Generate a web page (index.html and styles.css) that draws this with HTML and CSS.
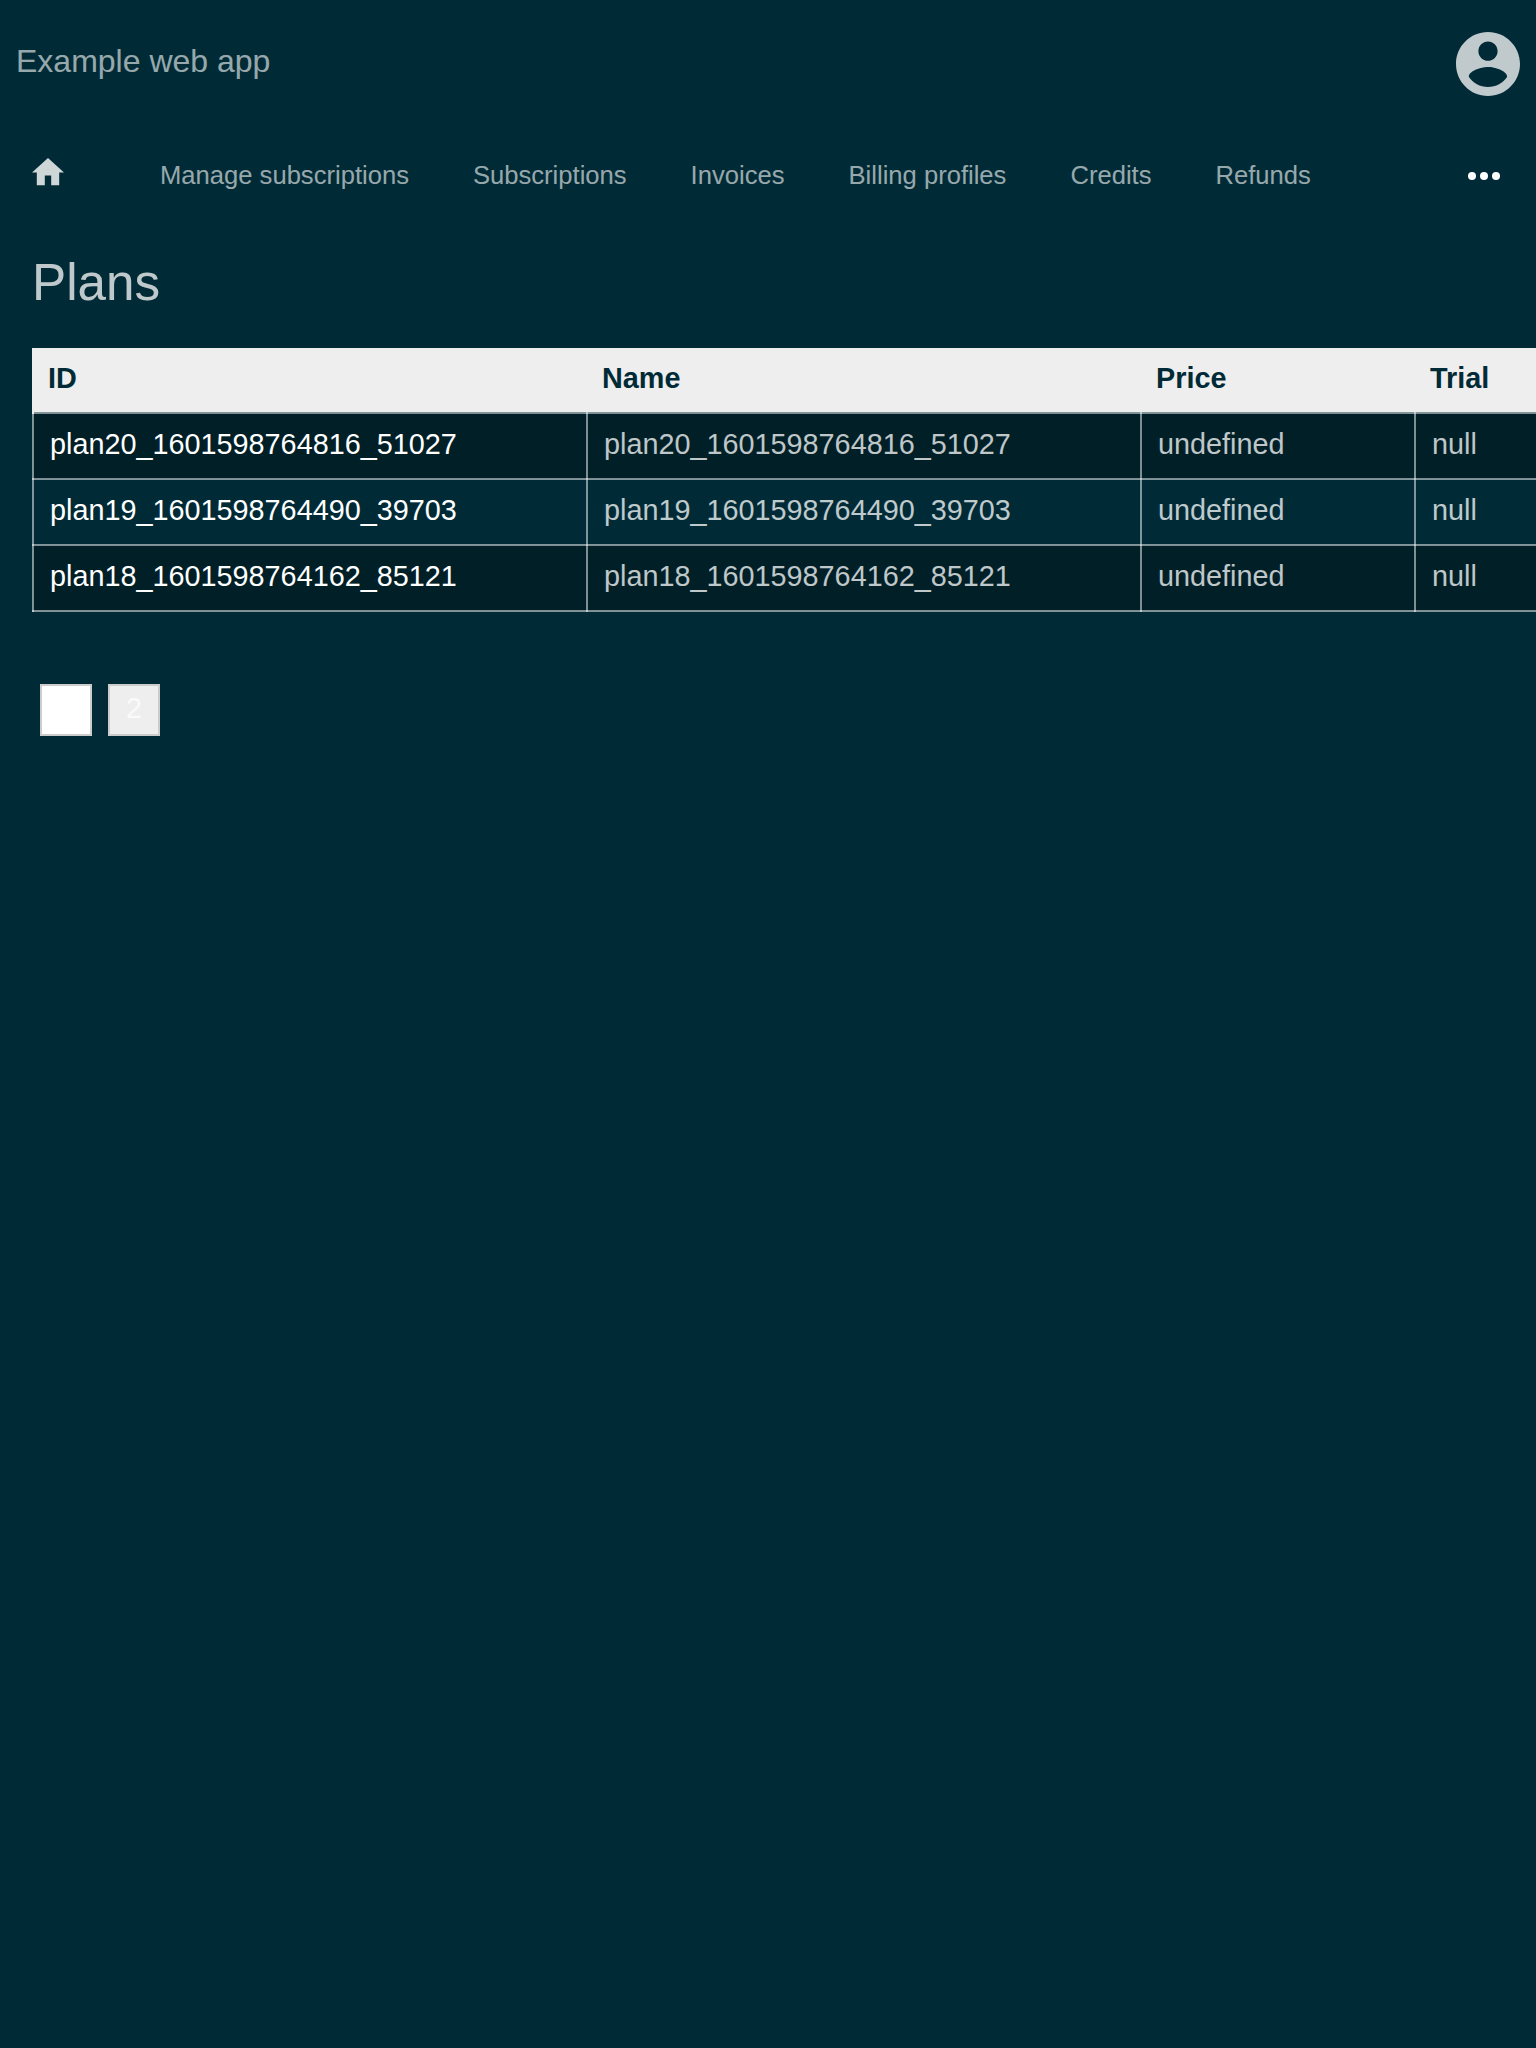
FILE: index.html
```html
<!DOCTYPE html>
<html lang="en">
<head>
<meta charset="utf-8">
<title>Plans</title>
<link rel="stylesheet" href="styles.css">
</head>
<body>
<header class="header">
  <span class="app-name">Example web app</span>
  <svg class="account-icon" viewBox="2 2 20 20"><path d="M12 2C6.48 2 2 6.48 2 12s4.48 10 10 10 10-4.48 10-10S17.52 2 12 2zm0 3c1.66 0 3 1.34 3 3s-1.34 3-3 3-3-1.34-3-3 1.34-3 3-3zm0 14.2c-2.5 0-4.71-1.28-6-3.22.03-1.99 4-3.08 6-3.08 1.99 0 5.97 1.09 6 3.08-1.29 1.94-3.5 3.22-6 3.22z"/></svg>
</header>
<nav class="nav">
  <svg class="home-icon" viewBox="2 3 20 17"><path d="M10 20v-6h4v6h5v-8h3L12 3 2 12h3v8z"/></svg>
  <div class="nav-links">
    <a>Manage subscriptions</a>
    <a>Subscriptions</a>
    <a>Invoices</a>
    <a>Billing profiles</a>
    <a>Credits</a>
    <a>Refunds</a>
  </div>
  <svg class="more-icon" viewBox="0 0 32 8"><circle cx="4" cy="4" r="4"/><circle cx="16" cy="4" r="4"/><circle cx="28" cy="4" r="4"/></svg>
</nav>
<main class="content">
  <h1 class="title">Plans</h1>
  <div class="table-wrap">
    <table class="plans">
      <colgroup><col class="col-id"><col class="col-name"><col class="col-price"><col class="col-trial"></colgroup>
      <thead>
        <tr><th>ID</th><th>Name</th><th>Price</th><th>Trial</th></tr>
      </thead>
      <tbody>
        <tr><td><a>plan20_1601598764816_51027</a></td><td>plan20_1601598764816_51027</td><td>undefined</td><td>null</td></tr>
        <tr><td><a>plan19_1601598764490_39703</a></td><td>plan19_1601598764490_39703</td><td>undefined</td><td>null</td></tr>
        <tr><td><a>plan18_1601598764162_85121</a></td><td>plan18_1601598764162_85121</td><td>undefined</td><td>null</td></tr>
      </tbody>
    </table>
  </div>
  <div class="pages">
    <a class="page current">1</a>
    <a class="page">2</a>
  </div>
</main>
</body>
</html>
```
FILE: styles.css
```css
* { box-sizing: border-box; }
html { overflow: hidden; }
body {
  margin: 0;
  height: 2048px;
  overflow: hidden;
  background: #002b36;
  color: rgba(255, 255, 255, .75);
  font: 28.8px/32px "Liberation Sans", Arial, sans-serif;
}
svg { display: block; flex: none; }
.header {
  display: flex;
  justify-content: space-between;
  height: 128px;
  padding: 32px 16px;
}
.app-name {
  padding-top: 11px;
  font-size: 32px;
  line-height: 36px;
  color: rgba(255, 255, 255, .6);
}
.account-icon { width: 64px; height: 64px; fill: #c0cacd; }
.nav {
  display: flex;
  align-items: center;
  height: 96px;
  padding: 0 36px 0 32px;
}
.home-icon { width: 32px; height: 27.2px; margin: 0 96px 8px 0; fill: #cfd6d8; }
.nav-links {
  display: flex;
  gap: 64px;
  flex: 1;
  padding-bottom: 2px;
  font-size: 25.6px;
  white-space: nowrap;
  color: rgba(255, 255, 255, .6);
}
.more-icon { width: 32px; height: 8px; fill: #fff; }
.content { padding: 0 32px; }
.title {
  margin: 0;
  height: 124px;
  padding-top: 29px;
  font-size: 51.2px;
  line-height: 60px;
  font-weight: 400;
}
.table-wrap {
  margin-right: -32px;
  overflow: hidden;
}
.plans {
  width: 1800px;
  table-layout: fixed;
  border-collapse: collapse;
}
.col-id, .col-name { width: 554px; }
.col-price { width: 274px; }
/* A non-repeating fill stays clear of the shared border below the header. */
.plans th {
  padding: 14px 15px 18px;
  background: linear-gradient(#eee, #eee) no-repeat 0 0 / 100% 100%;
  color: #002b36;
  text-align: left;
}
.plans th:first-child {
  padding-left: 14px;
  border-left: 2px solid #eee;
}
.plans td {
  padding: 14px 16px 18px;
  border: 2px solid rgba(255, 255, 255, .5);
}
.plans td a { color: #fff; }
.plans tbody tr:nth-child(odd) { background: #001f27; }
.pages {
  display: flex;
  gap: 16px;
  padding: 72px 8px;
}
.page {
  width: 52px;
  height: 52px;
  padding-top: 6px;
  border: 2px solid #ccc;
  background: #eee;
  color: #fafafa;
  text-align: center;
}
.page.current { background: #fff; color: #fff; }
```
